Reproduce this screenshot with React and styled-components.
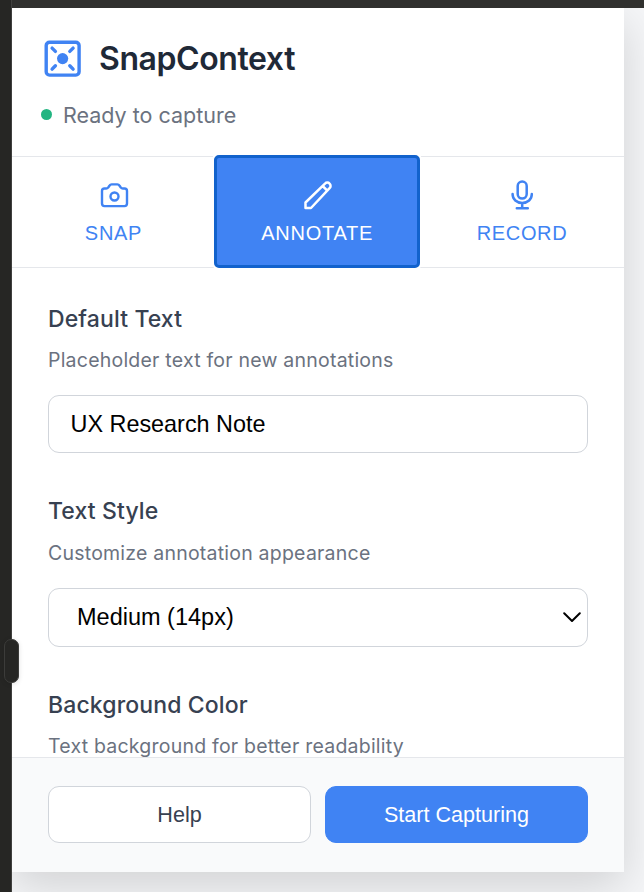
import React from "react";
import styled, { createGlobalStyle } from "styled-components";

const GlobalStyle = createGlobalStyle`
  * { box-sizing: border-box; }
  body { margin: 0; background: #f5f6f8; overflow: hidden; font-family: Inter, "Liberation Sans", sans-serif; }
  button, input { font-family: "Liberation Sans", Arial, sans-serif; }
`;

const Screen = styled.div`
  position: relative;
  display: grid;
  grid-template: 8px minmax(0, 1fr) / 12px minmax(0, 1fr);
  width: 644px;
  height: 892px;
  overflow: hidden;
  background: #f5f6f8;
`;
const SideRail = styled.div`
  grid-row: 1 / 3;
  z-index: 2;
  background: #262624;
  border-right: 1px solid #40403e;
`;
const TopRail = styled.div`
  z-index: 1;
  background: #30302e;
`;
const ResizeHandle = styled.div`
  position: absolute;
  z-index: 3;
  left: 4px;
  top: 639px;
  width: 15px;
  height: 44px;
  border: 1px solid #3c3c3a;
  border-radius: 7px;
  background: #262624;
  box-shadow: 0 1px 5px rgba(0, 0, 0, 0.12);
`;
const Panel = styled.main`
  display: flex;
  flex-direction: column;
  width: 612px;
  height: 864px;
  background: #fff;
  box-shadow: 0 14px 43px rgba(0, 0, 0, 0.15);
`;
const Header = styled.header`
  flex: none;
  height: 148px;
  padding: 28px 28px 0;
`;
const Brand = styled.div`
  display: flex;
  align-items: center;
  gap: 15px;
  height: 44px;
`;
const Title = styled.h1`
  margin: 2px 0 0;
  color: #1f2937;
  font-size: 32px;
  font-weight: 600;
  line-height: 44px;
  letter-spacing: -0.42px;
`;
const Status = styled.div`
  display: flex;
  align-items: center;
  gap: 11px;
  margin-top: 20px;
  height: 30px;
  color: #6b7280;
  font-size: 21.5px;
  line-height: 30px;
`;
const StatusDot = styled.span`
  width: 11px;
  height: 11px;
  margin: -1px 0 0 1px;
  border-radius: 50%;
  background: #22b581;
`;
const Tabs = styled.nav`
  flex: none;
  display: grid;
  grid-template-columns: 203px 205px 204px;
  height: 112px;
  border: solid #e5e7eb;
  border-width: 1px 0;
`;
const Tab = styled.button`
  display: flex;
  flex-direction: column;
  align-items: center;
  gap: 10px;
  margin: ${(p) => (p.$active ? "-2px 0 -1px -0.6px" : "0")};
  padding: ${(p) => (p.$active ? "21px 0 0" : "22px 0 0")};
  border: ${(p) => (p.$active ? "3px solid #1262cc" : "0")};
  border-radius: ${(p) => (p.$active ? "5px" : "0")};
  box-shadow: ${(p) => (p.$active ? "0 0 0 2px #fff" : "none")};
  background: ${(p) => (p.$active ? "#4083f3" : "transparent")};
  color: ${(p) => (p.$active ? "#fff" : "#4083f3")};
`;
const TabLabel = styled.span`
  font-size: 20px;
  line-height: 24px;
  letter-spacing: ${(p) => p.$tracking};
`;
const Content = styled.div`
  flex: 1;
  min-height: 0;
  overflow: hidden;
  padding: 36px 36px 0;
`;
const Field = styled.section`
  margin-bottom: ${(p) => p.$gap}px;
`;
const Label = styled.h2`
  margin: 0;
  color: #374151;
  font-size: 23px;
  font-weight: 500;
  line-height: 30px;
  letter-spacing: 0.12px;
`;
const Hint = styled.p`
  margin: ${(p) => p.$margin};
  color: #6b7280;
  font-size: 19.5px;
  line-height: 28px;
  letter-spacing: 0.22px;
`;
const TextInput = styled.input`
  display: block;
  width: 540px;
  height: 58px;
  padding: 0 21.5px;
  border: 1px solid #d1d5db;
  border-radius: 11px;
  outline: 0;
  background: #fff;
  color: #000;
  font-size: 23.4px;
`;
const SelectBox = styled.button`
  display: flex;
  align-items: center;
  justify-content: space-between;
  width: 540px;
  height: 59px;
  padding: 0 6px 0 28px;
  border: 1px solid #d1d5db;
  border-radius: 11px;
  background: #fff;
  color: #000;
  font-size: 23.5px;
`;
const Footer = styled.footer`
  flex: none;
  display: grid;
  grid-template-columns: 263px 263px;
  gap: 14px;
  height: 115px;
  padding: 28px 36px;
  border-top: 1px solid #e5e7eb;
  background: #f9fafb;
`;
const FooterButton = styled.button`
  height: 57px;
  padding: 0;
  border: 1px solid ${(p) => (p.$primary ? "#4083f3" : "#d1d5db")};
  border-radius: 11px;
  background: ${(p) => (p.$primary ? "#4083f3" : "#fff")};
  color: ${(p) => (p.$primary ? "#fff" : "#374151")};
  font-size: 21.6px;
`;
const Icon = styled.svg`
  display: block;
  flex: none;
  fill: none;
  stroke: currentColor;
  stroke-linecap: round;
  stroke-linejoin: round;
`;

const Logo = () => (
  <Icon width="44" height="44" viewBox="0 0 44 44" color="#4083f3" strokeWidth="3.4">
    <rect x="6.2" y="6.2" width="32.9" height="32.9" rx="3.3" />
    <circle cx="22.6" cy="22.6" r="5.6" fill="currentColor" stroke="none" />
    <path d="m12.1 12.1 3.3 3.3M33.1 12.1l-3.3 3.3M12.1 33.1l3.3-3.3M33.1 33.1l-3.3-3.3" />
  </Icon>
);
const Camera = () => (
  <Icon width="32" height="32" viewBox="0 0 32 32" strokeWidth="2.4">
    <path d="M6.5 9.5h1.7c.8 0 1.5-.4 2-1l1.4-2c.5-.8 1.1-1.1 2-1.1h5.8c.9 0 1.5.3 2 1.1l1.4 2c.5.6 1.2 1 2 1h1.7c1.6 0 2.5.9 2.5 2.5v12.6c0 1.6-.9 2.5-2.5 2.5h-20C4.9 27.1 4 26.2 4 24.6V12c0-1.6.9-2.5 2.5-2.5Z" />
    <circle cx="16.5" cy="17.5" r="4" />
  </Icon>
);
const Pencil = () => (
  <Icon width="32" height="32" viewBox="0 0 32 32" strokeWidth="2.5">
    <path d="M4.5 29v-5.5L24 4.6a3.2 3.2 0 0 1 4.6 0 3.2 3.2 0 0 1 0 4.6L10 29ZM21.6 7l4.7 4.7" />
  </Icon>
);
const Microphone = () => (
  <Icon width="32" height="32" viewBox="0 0 32 32" strokeWidth="2.5">
    <rect x="11.7" y="2.6" width="9" height="17" rx="4.5" />
    <path d="M6.6 15v.3c0 5 4 8.6 9.6 8.6s9.6-3.6 9.6-8.6V15M16.2 23.9v5.3M10.8 29.2h11" />
  </Icon>
);
const Chevron = () => (
  <Icon width="18" height="18" viewBox="0 0 18 18" strokeWidth="2">
    <path d="m1.2 4.2 7.8 7.8 7.8-7.8" />
  </Icon>
);

export default function App() {
  return (
    <>
      <GlobalStyle />
      <Screen>
        <SideRail />
        <TopRail />
        <Panel>
          <Header>
            <Brand>
              <Logo />
              <Title>SnapContext</Title>
            </Brand>
            <Status>
              <StatusDot />
              Ready to capture
            </Status>
          </Header>
          <Tabs>
            <Tab><Camera /><TabLabel $tracking="0.7px">SNAP</TabLabel></Tab>
            <Tab $active><Pencil /><TabLabel $tracking="0.75px">ANNOTATE</TabLabel></Tab>
            <Tab><Microphone /><TabLabel $tracking="0.65px">RECORD</TabLabel></Tab>
          </Tabs>
          <Content>
            <Field $gap={43}>
              <Label>Default Text</Label>
              <Hint $margin="12px 0 21px">Placeholder text for new annotations</Hint>
              <TextInput defaultValue="UX Research Note" />
            </Field>
            <Field $gap={43}>
              <Label>Text Style</Label>
              <Hint $margin="13px 0 21px">Customize annotation appearance</Hint>
              <SelectBox>Medium (14px)<Chevron /></SelectBox>
            </Field>
            <Field $gap={0}>
              <Label>Background Color</Label>
              <Hint $margin="12px 0 0">Text background for better readability</Hint>
            </Field>
          </Content>
          <Footer>
            <FooterButton>Help</FooterButton>
            <FooterButton $primary>Start Capturing</FooterButton>
          </Footer>
        </Panel>
        <ResizeHandle />
      </Screen>
    </>
  );
}
